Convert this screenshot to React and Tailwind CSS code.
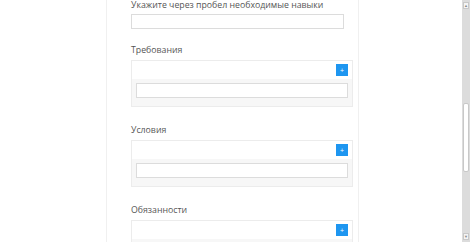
import React from 'react';

function Section({ title, first }) {
  return (
    <div className={first ? 'mt-[16px]' : 'mt-[18px]'}>
      <div className="h-[10px] text-[8.75px] leading-[10px] text-[#555]">{title}</div>
      <div className="mt-[5px] w-[222px] border border-[#ececec]">
        <div className="flex h-[18px] justify-end bg-white pr-[4px] pt-[3px]">
          <button className="flex h-[12px] w-[12px] items-center justify-center bg-[#1e96f0] text-[7px] leading-none text-white">
            +
          </button>
        </div>
        <div className="bg-[#f7f7f7] px-[4px] pb-[8px] pt-[4px]">
          <div className="h-[15px] w-full border border-[#dcdcdc] bg-white"></div>
        </div>
      </div>
    </div>
  );
}

export default function App() {
  return (
    <div
      className="flex h-[242px] w-[470px] overflow-hidden bg-white"
      style={{ fontFamily: '"Open Sans", "Noto Sans", sans-serif' }}
    >
      <div className="flex w-[462px] flex-col">
        <div className="h-px bg-white"></div>
        <div className="h-px bg-[#dedede]"></div>
        <div className="ml-[106px] flex-1 w-[253px] border-x border-[#f0f0f0] pl-[24px]">
          <div className="h-[10px] text-[8.75px] leading-[10px] text-[#555]">
            Укажите через пробел необходимые навыки
          </div>
          <div className="mt-[4px] h-[15px] w-[213px] border border-[#dcdcdc] bg-white"></div>
          <Section title="Требования" first />
          <Section title="Условия" />
          <Section title="Обязанности" />
        </div>
      </div>
      <div className="flex w-[8px] flex-col bg-[#dcdcdc]">
        <div className="mx-[1px] mt-[2px] flex h-[7px] items-center justify-center border border-[#c8c8c8] bg-[#f4f4f4] text-[4px] leading-none text-[#888]">
          ▲
        </div>
        <div className="flex-1 pt-[94px]">
          <div className="mx-[1px] h-[69px] rounded-[2px] border border-[#c8c8c8] bg-white"></div>
        </div>
        <div className="mx-[1px] mb-[2px] flex h-[7px] items-center justify-center border border-[#c8c8c8] bg-[#f4f4f4] text-[4px] leading-none text-[#888]">
          ▼
        </div>
      </div>
    </div>
  );
}
